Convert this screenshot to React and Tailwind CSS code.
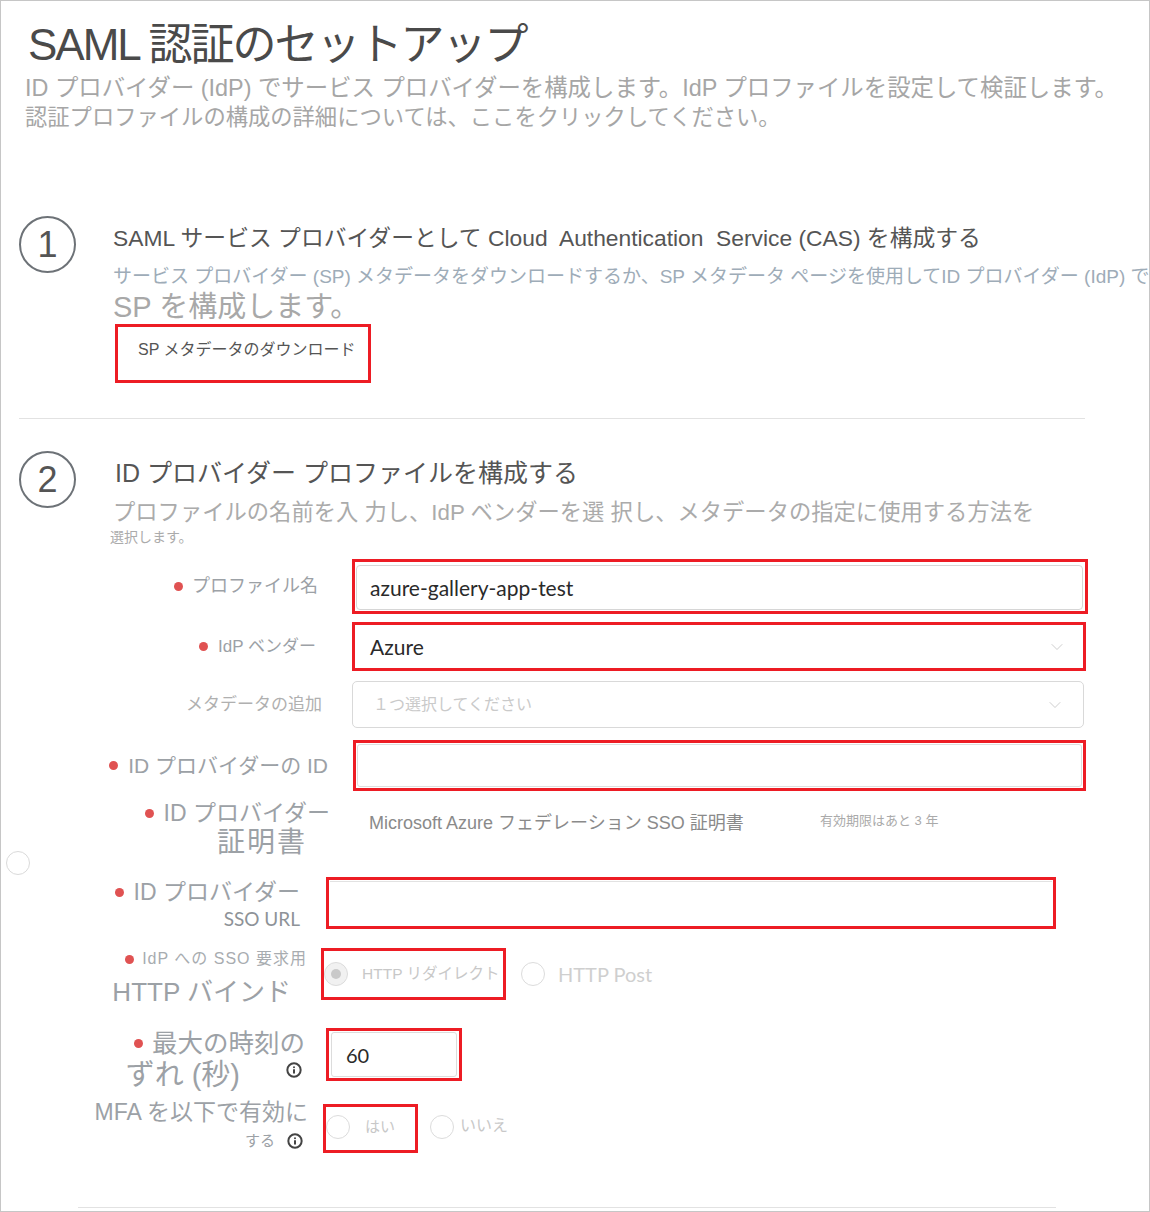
import React from 'react'
import { ChevronDown, Info } from 'lucide-react'

const lato = "font-['Lato','Noto_Sans_CJK_JP',sans-serif]"

function Dot() {
  return <span className="inline-block w-[9px] h-[9px] rounded-full bg-[#e05252] shrink-0" />
}

function Radio({ checked }) {
  return (
    <span
      className={`flex items-center justify-center w-[24px] h-[24px] rounded-full border border-[#dcdcdc] shrink-0 ${
        checked ? 'bg-[#f1f1f1]' : 'bg-white'
      }`}
    >
      {checked && <span className="w-[10px] h-[10px] rounded-full bg-[#c9c9c9]" />}
    </span>
  )
}

function StepCircle({ n }) {
  return (
    <div className="flex items-center justify-center w-[57px] h-[57px] shrink-0 rounded-full border-2 border-[#6d7277] text-[36px] leading-none text-[#555]">
      {n}
    </div>
  )
}

export default function App() {
  return (
    <div className="relative w-[1150px] h-[1212px] overflow-hidden border border-[#c6c6c6] bg-white font-['Liberation_Sans','Noto_Sans_CJK_JP',sans-serif]">
      {/* Header */}
      <div className="pt-[16px]">
        <h1 className="pl-[27px] text-[44px] leading-[56px] tracking-[-2px] text-[#4a4a4a] whitespace-nowrap">
          SAML 認証のセットアップ
        </h1>
        <p className="pl-[24px] text-[23.4px] leading-[30px] text-[#a6a6a6] whitespace-nowrap">
          ID プロバイダー (IdP) でサービス プロバイダーを構成します。IdP プロファイルを設定して検証します。
        </p>
        <p className="pl-[24px] text-[22.3px] leading-[30px] text-[#a6a6a6] whitespace-nowrap">
          認証プロファイルの構成の詳細については、ここをクリックしてください。
        </p>
      </div>

      {/* Step 1 */}
      <div className="flex pl-[18px] mt-[83px]">
        <StepCircle n="1" />
        <div className="ml-[37px] mt-[7px]">
          <h2 className="text-[22.8px] leading-[30px] text-[#555] whitespace-nowrap">
            SAML サービス プロバイダーとして Cloud&nbsp; Authentication&nbsp; Service (CAS) を構成する
          </h2>
          <p className="mt-[11px] text-[19px] leading-[26px] text-[#9eacb8] whitespace-nowrap">
            サービス プロバイダー (SP) メタデータをダウンロードするか、SP メタデータ ページを使用してID プロバイダー (IdP) で
          </p>
          <p className="text-[29px] leading-[34px] text-[#a8a8a8] whitespace-nowrap">SP を構成します。</p>
          <div className="ml-[2px] w-[256px] h-[59px] border-[3px] border-[#ed1c24] pt-[12px] pl-[20px] text-[16px] leading-[22px] text-[#555] whitespace-nowrap">
            SP メタデータのダウンロード
          </div>
        </div>
      </div>

      <div className="mt-[35px] ml-[18px] w-[1066px] h-px bg-[#e2e2e2]" />

      {/* Step 2 */}
      <div className="flex pl-[18px] mt-[32px]">
        <StepCircle n="2" />
        <div className="ml-[39px] mt-[5px]">
          <h2 className="text-[25px] leading-[34px] text-[#555] whitespace-nowrap">ID プロバイダー プロファイルを構成する</h2>
          <p className="mt-[9px] -ml-[2px] text-[22.3px] leading-[28px] text-[#ababab] whitespace-nowrap">
            プロファイルの名前を入 力し、IdP ベンダーを選 択し、メタデータの指定に使用する方法を
          </p>
          <p className="mt-[1px] -ml-[5px] text-[14px] leading-[18px] text-[#ababab]">選択します。</p>
        </div>
      </div>

      {/* Form */}
      <div className="mt-[13px]">
        {/* Profile name */}
        <div className="flex items-center h-[55px]">
          <div className="w-[317px] flex items-center justify-end gap-[9px] text-[18px] text-[#9ca1a6]">
            <Dot />
            <span>プロファイル名</span>
          </div>
          <div className="ml-[34px] w-[736px] h-[55px] border-[3px] border-[#ed1c24] pl-[1px] pr-[2px] pt-[3px] pb-[1px]">
            <div className={`h-full flex items-center pl-[13px] border border-[#d6d6d6] rounded-[4px] text-[21px] text-[#2a2a2a] ${lato}`}>
              azure-gallery-app-test
            </div>
          </div>
        </div>

        {/* IdP vendor */}
        <div className="flex items-center h-[49px] mt-[8px]">
          <div className="w-[315px] flex items-center justify-end gap-[10px] text-[17px] text-[#9ca1a6]">
            <Dot />
            <span>IdP ベンダー</span>
          </div>
          <div className="ml-[36px] w-[734px] h-[49px] border-[3px] border-[#ed1c24] flex items-center justify-between pl-[15px] pr-[16px]">
            <span className={`text-[21px] text-[#2a2a2a] ${lato}`}>Azure</span>
            <ChevronDown size={20} strokeWidth={1} className="text-[#c4c4c4]" />
          </div>
        </div>

        {/* Metadata */}
        <div className="flex items-center h-[47px] mt-[10px]">
          <div className="w-[321px] text-right text-[17px] text-[#b0b0b0]">メタデータの追加</div>
          <div className="ml-[30px] w-[732px] h-[47px] border border-[#d9d9d9] rounded-[5px] flex items-center justify-between pl-[20px] pr-[18px]">
            <span className="text-[16px] text-[#cacaca]">１つ選択してください</span>
            <ChevronDown size={20} strokeWidth={1} className="text-[#c4c4c4]" />
          </div>
        </div>

        {/* IdP ID */}
        <div className="flex items-center h-[51px] mt-[12px]">
          <div className="w-[327px] flex items-center justify-end gap-[10px] text-[21px] text-[#9ca1a6]">
            <Dot />
            <span>ID プロバイダーの ID</span>
          </div>
          <div className="ml-[25px] w-[733px] h-[51px] border-[3px] border-[#ed1c24] px-[1px] pt-[1px] pb-[1px]">
            <div className="h-full border border-[#dedede] rounded-[3px]" />
          </div>
        </div>

        {/* Certificate */}
        <div className="flex items-start mt-[7px]">
          <div className="w-[329px] flex flex-col items-end text-[#9ca1a6]">
            <div className="flex items-center gap-[10px] text-[23px] leading-[30px]">
              <Dot />
              <span>ID プロバイダー</span>
            </div>
            <div className="pr-[23px] text-[28px] leading-[30px] tracking-[2px]">証明書</div>
          </div>
          <div className="ml-[39px] mt-[13px] flex items-center text-[#8a8a8a]">
            <span className="w-[451px] text-[18px] leading-[24px] whitespace-nowrap">
              Microsoft Azure フェデレーション SSO 証明書
            </span>
            <span className="-mt-[4px] text-[13px] leading-[20px] text-[#aaa] whitespace-nowrap">有効期限はあと 3 年</span>
          </div>
        </div>

        {/* SSO URL */}
        <div className="flex items-start mt-[19px]">
          <div className="w-[299px] flex flex-col items-end text-[#9ca1a6]">
            <div className="mt-[1px] flex items-center gap-[10px] text-[23px] leading-[28px]">
              <Dot />
              <span>ID プロバイダー</span>
            </div>
            <div className={`text-[19px] leading-[26px] text-[#8e9398] ${lato}`}>SSO URL</div>
          </div>
          <div className="ml-[26px] w-[730px] h-[52px] border-[3px] border-[#ed1c24] px-[1px] pt-[1px]">
            <div className="h-full border-t border-[#e2e2e2]" />
          </div>
        </div>

        {/* HTTP binding */}
        <div className="flex items-start mt-[16px]">
          <div className="w-[306px] flex flex-col items-end text-[#9ca1a6]">
            <div className="flex items-center gap-[8px] text-[16px] leading-[22px] tracking-[1px] text-[#a8acb0]">
              <Dot />
              <span>IdP への SSO 要求用</span>
            </div>
            <div className="pr-[16px] text-[26px] leading-[44px]">HTTP バインド</div>
          </div>
          <div className="flex items-center h-[52px]">
            <div className="ml-[14px] w-[185px] h-[52px] border-[3px] border-[#ed1c24] flex items-center overflow-hidden">
              <Radio checked />
              <span className="ml-[14px] text-[15.5px] text-[#c8c8c8] whitespace-nowrap">HTTP リダイレクト</span>
            </div>
            <span className="ml-[15px]">
              <Radio />
            </span>
            <span className={`ml-[13px] text-[20px] text-[#cfcfcf] ${lato}`}>HTTP Post</span>
          </div>
        </div>

        {/* Clock skew */}
        <div className="flex items-start mt-[14px]">
          <div className="w-[304px] flex flex-col items-end text-[#9ca1a6]">
            <div className="flex items-center gap-[9px] text-[25.5px] leading-[30px]">
              <Dot />
              <span>最大の時刻の</span>
            </div>
            <div className="flex items-start pr-[3px]">
              <span className="text-[29px] leading-[34px]">ずれ (秒)</span>
              <Info size={16} strokeWidth={3} className="ml-[46px] mt-[4px] text-[#444]" />
            </div>
          </div>
          <div className="ml-[21px] w-[136px] h-[53px] border-[3px] border-[#ed1c24] px-[2px] pt-[1px] pb-[1px]">
            <div className={`h-full flex items-center pl-[14px] border border-[#dcdcdc] rounded-[3px] text-[20px] text-[#2a2a2a] ${lato}`}>
              60
            </div>
          </div>
        </div>

        {/* MFA */}
        <div className="flex items-start mt-[6px]">
          <div className="w-[307px] flex flex-col items-end text-[#9ca1a6]">
            <div className="text-[23px] leading-[28px] whitespace-nowrap">MFA を以下で有効に</div>
            <div className="flex items-center pr-[5px]">
              <span className="text-[15px] leading-[30px]">する</span>
              <Info size={16} strokeWidth={3} className="ml-[12px] text-[#444]" />
            </div>
          </div>
          <div className="mt-[6px] flex items-center h-[49px]">
            <div className="ml-[15px] w-[95px] h-[49px] border-[3px] border-[#ed1c24] flex items-center pb-[3px]">
              <Radio />
              <span className="ml-[15px] text-[15px] text-[#c8c8c8]">はい</span>
            </div>
            <span className="ml-[12px] pb-[3px]">
              <Radio />
            </span>
            <span className="ml-[6px] pb-[6px] text-[16px] text-[#c8c8c8]">いいえ</span>
          </div>
        </div>

        <div className="mt-[51px] ml-[77px] w-[978px] h-px bg-[#e2e2e2]" />
      </div>

      {/* stray radio at the left edge */}
      <span className="absolute left-[5px] top-[850px] w-[24px] h-[24px] rounded-full border border-[#dadada]" />
    </div>
  )
}
